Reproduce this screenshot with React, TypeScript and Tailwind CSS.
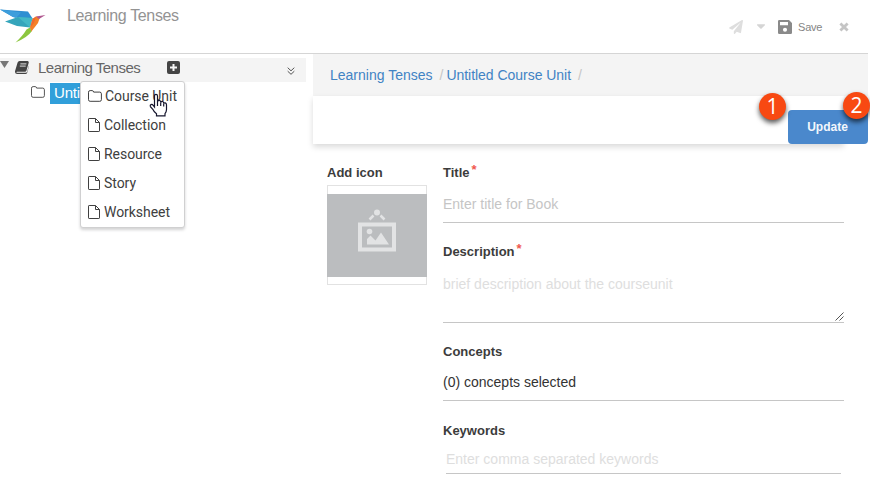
import React from "react";
import { FaPaperPlane, FaCaretDown } from "react-icons/fa";

const sans = "font-['Liberation_Sans',Arial,sans-serif]";

function BirdLogo() {
  return (
    <svg width="47" height="44" viewBox="0 0 47 44" className="block">
      <path d="M0 9.500 28 11.500 32.500 18.500 30 20 13 17Z" fill="#2f8fd2" />
      <path d="M0 9.500 21 12.500 16 18 13 17Z" fill="#3d9edc" />
      <path d="M5 21.500 18 17 32.500 18 30 27.500 17 26Z" fill="#35a5bb" />
      <path d="M18 17 32.500 18 30 27.500Z" fill="#43b8c6" />
      <path d="M30 28 32.500 19 36 16.500 40 17 38 23 31 32Z" fill="#f58027" />
      <path d="M32.500 19 36 16.500 34 23 30 28Z" fill="#ee6a2e" />
      <path d="M36 16.500 45.500 15 39 19Z" fill="#b0578f" />
      <path d="M30 27.500 31.500 31.500Q28 37 15.500 42.500 23 35.500 26.500 29.500Z" fill="#8cc63f" />
    </svg>
  );
}

function FolderIcon({ className = "" }: { className?: string }) {
  return (
    <svg width="14" height="12" viewBox="0 0 14 12" className={className} fill="none" stroke="currentColor">
      <path d="M.5 2.200Q.5.600 2.100.600H4.200Q5.500.600 5.600 2.100H11.800Q13.400 2.200 13.400 3.800V9.700Q13.400 11.300 11.800 11.300H2.100Q.5 11.300.5 9.700Z" />
    </svg>
  );
}

function FileIcon() {
  return (
    <svg width="12" height="14" viewBox="0 0 12 14" className="-mt-px mr-1 shrink-0" fill="none" stroke="currentColor">
      <path d="M.5 1.100Q.5.500 1.100.500H7.500L11.500 4.500V12.900Q11.500 13.500 10.900 13.500H1.100Q.5 13.500.5 12.900ZM7.500.500V4.500H11.500" />
    </svg>
  );
}

function BookIcon() {
  return (
    <svg width="14" height="13" viewBox="0 0 14 13" className="mb-[5px] ml-[15px]">
      <path d="M4.500 0H12.700Q14 .3 13.700 1.800L11.500 9.600Q11.100 10.800 9.900 10.800H2Q1.200 11 1.700 11.700H10.800Q11.800 11.700 12.200 10.500L13.900 4.500 14 5 12.200 11.700Q11.800 12.900 10.500 12.900H2.200Q-.2 12.700 0 10.200L2.600 1.500Q3.100 0 4.500 0Z" fill="#444" />
      <path d="M5.400 2.900H11.400M4.800 5.100H10.700" stroke="#f4f4f4" strokeWidth=".9" />
    </svg>
  );
}

function HandPointer() {
  return (
    <svg width="19" height="25" viewBox="0 0 19 25" className="absolute left-[149px] top-[93px] z-20">
      <path
        d="M5.500 14V3Q5.500 1.300 7 1.300T8.500 3V9Q8.700 7.300 10.200 7.400T11.700 9.200V9.600Q12 8.200 13.300 8.400T14.700 10.100V10.700Q15 9.600 16.200 9.900T17.500 11.700V16.500Q17.500 18.700 16 20.600V22.800H7.500V20.700Q4.800 18.800 3.800 16.300L1.400 13.600Q.8 12.200 2 11.600T4.200 12.300Z"
        fill="#fff"
        stroke="#15152d"
        strokeWidth="1.2"
      />
      <path d="M8.500 9V13M11.700 9.600V13M14.700 10.700V13.500" stroke="#15152d" strokeWidth="1.2" />
    </svg>
  );
}

function Header() {
  return (
    <header className="flex h-[54px] w-[868px] items-start border-b border-[#d5d5d5]">
      <BirdLogo />
      <span className="ml-5 mt-[6px] w-[640px] whitespace-nowrap text-[16px] leading-5 tracking-[-0.36px] text-[#939393]">Learning Tenses</span>
      <div className="ml-[22px] mt-[17px] flex h-5 items-center">
        <FaPaperPlane size={14} color="#dedede" className="-mt-px" />
        <FaCaretDown size={14} color="#d5d5d5" className="-mt-[2px] ml-[11px]" />
        <svg width="14" height="14" viewBox="0 0 14 14" className="ml-[10px]">
          <path fillRule="evenodd" d="M1.300 0H11L14 3V12.700Q14 14 12.700 14H1.300Q0 14 0 12.700V1.300Q0 0 1.300 0ZM2 2V5.300H10V2ZM7 7.700A2 2 0 1 0 7 11.800 2 2 0 1 0 7 7.700Z" fill="#8a8a8a" />
        </svg>
        <span className="ml-[6px] w-[25px] text-[11px] tracking-[-0.2px] text-[#858585]">Save</span>
        <svg width="10" height="10" viewBox="0 0 10 10" className="-mt-px ml-4">
          <path d="M1.400 1.400 8.600 8.600M8.600 1.400 1.400 8.600" stroke="#c5c5c5" strokeWidth="2.800" />
        </svg>
      </div>
    </header>
  );
}

function CreateMenu() {
  return (
    <ul className="absolute left-[80px] top-[81px] z-10 flex h-[147px] w-[105px] flex-col rounded-[3px] border border-[#d0d0d1] bg-white pl-[7px] font-[Roboto,sans-serif] text-[14px] text-[#404040] shadow-[0_2px_3px_rgba(34,36,38,.2)]">
      <li className="flex h-[29px] items-center whitespace-nowrap tracking-[-0.05px]">
        <FolderIcon className="-mt-[2px] mr-[3px] shrink-0" />
        Course Unit
      </li>
      {["Collection", "Resource", "Story", "Worksheet"].map((name) => (
        <li key={name} className="flex h-[29px] items-center whitespace-nowrap tracking-[-0.05px]">
          <FileIcon />
          {name}
        </li>
      ))}
    </ul>
  );
}

function Sidebar() {
  return (
    <aside className="w-[306px] pt-1">
      <div className="flex h-6 items-center bg-[#f4f4f4]">
        <svg width="9" height="7" viewBox="0 0 9 7" className="mb-[12px] -mr-[9px]">
          <path d="M0 0H9L4.500 7Z" fill="#777" />
        </svg>
        <BookIcon />
        <span className="ml-[9px] mt-[-4px] w-[129px] whitespace-nowrap text-[15px] tracking-[-0.5px] text-[#666]">Learning Tenses</span>
        <svg width="13" height="13" viewBox="0 0 13 13" className="mb-[5px]">
          <rect width="13" height="13" rx="2" fill="#444" />
          <path d="M6.500 3V10M3 6.500H10" stroke="#f4f4f4" strokeWidth="2" />
        </svg>
        <svg width="8" height="8" viewBox="0 0 8 8" className="ml-[107px] mt-[2px]" fill="none" stroke="#555">
          <path d="M.7.700 4 3.800 7.300.700M.7 4.200 4 7.300 7.300 4.200" />
        </svg>
      </div>
      <div className="flex items-center pl-[31px] pt-px text-[#555]">
        <FolderIcon className="mb-[4px]" />
        <span className="ml-[5px] h-[21px] w-[60px] overflow-hidden bg-[#319fda] pl-1 text-[15px] leading-[19px] tracking-[-0.2px] text-white">Untitled</span>
      </div>
    </aside>
  );
}

function ImagePlaceholder() {
  return (
    <div className="mt-[3px] h-[100px] w-[100px] border border-[#e2e2e2] py-[8px]">
      <svg width="100" height="83" viewBox="0 0 100 83" className="-ml-px block max-w-none">
        <rect width="100" height="83" fill="#bbbdbf" />
        <g fill="none" stroke="#e2e3e4">
          <rect x="33" y="30.500" width="34" height="25" strokeWidth="4" />
          <path d="M46.500 21.500 42.500 25.500M53.500 21.500 57.500 25.500" strokeWidth="2.500" />
        </g>
        <g fill="#e2e3e4">
          <circle cx="50" cy="18.500" r="3" />
          <circle cx="42.500" cy="37.500" r="2.800" />
          <path d="M40 50.500V45L43.500 41.500 48.500 46.500 54 38.500 62 50.500Z" />
        </g>
      </svg>
    </div>
  );
}

function Label({ text, required = false }: { text: string; required?: boolean }) {
  return (
    <div className="flex h-5 items-start whitespace-nowrap text-[13px] font-bold leading-5 text-[#3c3c3c]">
      {text}
      {required && <span className="ml-[2px] mt-[-3px] text-[#f0584e]">*</span>}
    </div>
  );
}

function Form() {
  return (
    <main className="flex pl-[14px] pt-[19px]">
      <div className="w-[116px]">
        <div className="h-[19px]"><Label text="Add icon" /></div>
        <ImagePlaceholder />
      </div>
      <div className="w-[401px] text-[14px]">
        <Label text="Title" required />
        <div className="h-[40px] border-b border-[#c6c6c6] pt-[11px] leading-5 text-[#c5c5c5]">Enter title for Book</div>
        <div className="mt-[19px]"><Label text="Description" required /></div>
        <div className="relative h-[61px] border-b border-[#c6c6c6] pt-[12px] leading-5 text-[#dedede]">
          brief description about the courseunit
          <svg width="9" height="9" viewBox="0 0 9 9" className="absolute bottom-px right-0" stroke="#555">
            <path d="M.5 8.500 8.500.500M4.500 8.500 8.500 4.500" />
          </svg>
        </div>
        <div className="mt-[19px]"><Label text="Concepts" /></div>
        <div className="h-[39px] border-b border-[#c6c6c6] pt-[10px] leading-5 text-[#333]">(0) concepts selected</div>
        <div className="mt-[20px]"><Label text="Keywords" /></div>
        <div className="mx-[3px] h-[33px] border-b border-[#c6c6c6] pt-[8px] leading-5 text-[#dedede]">Enter comma separated keywords</div>
      </div>
    </main>
  );
}

function Badge({ n, className }: { n: number; className: string }) {
  return (
    <span className={`absolute flex h-[27px] w-[27px] items-center justify-center rounded-full bg-[#f84912] font-['Open_Sans',sans-serif] text-[21px] leading-none text-white shadow-[0_3px_5px_rgba(0,0,0,.65)] ${className}`}>
      {n}
    </span>
  );
}

export default function App() {
  return (
    <div className={`relative h-[484px] w-[870px] overflow-hidden bg-white ${sans}`}>
      <Header />
      <div className="flex">
        <Sidebar />
        <section className="ml-[7px] w-[555px]">
          <nav className="flex h-[42px] items-center bg-[#f4f4f4] pl-[17px] text-[14px] text-[#4183c4]">
            <span>Learning Tenses</span>
            <span className="ml-[7px] text-[#c6c6c6]">/</span>
            <span className="ml-[3px] tracking-[-0.03px]">Untitled Course Unit</span>
            <span className="ml-[7px] text-[#c6c6c6]">/</span>
          </nav>
          <div className="relative flex h-12 w-[531px] bg-white shadow-[0_3px_6px_rgba(0,0,0,.15)]">
            <button className="ml-[475px] mt-[14px] h-[34px] w-[80px] shrink-0 rounded-[4px] bg-[#4a88cc] pr-px text-[12px] font-bold text-[#f3f7fc]">Update</button>
            <Badge n={1} className="left-[446px] top-[-3px]" />
            <Badge n={2} className="left-[530px] top-[-4px]" />
          </div>
          <Form />
        </section>
      </div>
      <CreateMenu />
      <HandPointer />
    </div>
  );
}
